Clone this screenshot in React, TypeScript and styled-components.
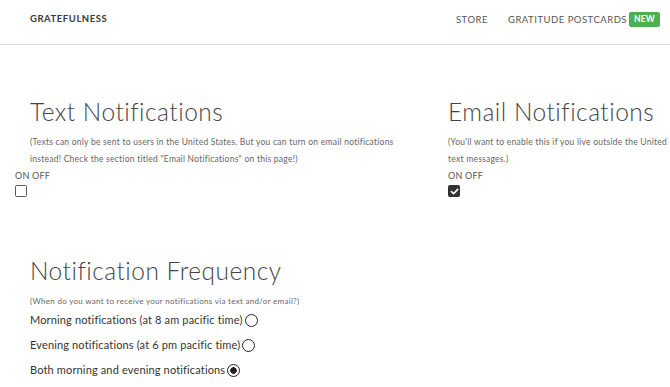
import styled, { createGlobalStyle } from "styled-components";

const GlobalStyle = createGlobalStyle`
    html, body {
        margin: 0;
        padding: 0;
        background: #ffffff;
        overflow: hidden;
    }
    body {
        font-family: Lato, "Open Sans", sans-serif;
        color: #333333;
    }
`;

interface SectionInfo {
    title: string;
    lines: string[];
    checked: boolean;
}

const sections: SectionInfo[] = [
    {
        title: "Text Notifications",
        lines: [
            "(Texts can only be sent to users in the United States. But you can turn on email notifications",
            "instead! Check the section titled \"Email Notifications\" on this page!)",
        ],
        checked: false,
    },
    {
        title: "Email Notifications",
        lines: [
            "(You'll want to enable this if you live outside the United States or if you don't want to receive",
            "text messages.)",
        ],
        checked: true,
    },
];

const frequencies = [
    { label: "Morning notifications (at 8 am pacific time)", selected: false },
    { label: "Evening notifications (at 6 pm pacific time)", selected: false },
    { label: "Both morning and evening notifications", selected: true },
];

export default function App() {
    return (
        <Page>
            <GlobalStyle />
            <NavBar>
                <Brand>GRATEFULNESS</Brand>
                <NavLinks>
                    <NavLink>STORE</NavLink>
                    <NavLink>
                        GRATITUDE POSTCARDS
                        <NewBadge>NEW</NewBadge>
                    </NavLink>
                </NavLinks>
            </NavBar>

            <Columns>
                {sections.map(function (section, i) {
                    const first = i === 0;
                    return (
                        <Column key={section.title} $first={first}>
                            <Heading>{section.title}</Heading>
                            <Description>
                                {section.lines.map(function (line) {
                                    return <span key={line}>{line}<br /></span>;
                                })}
                            </Description>
                            <Toggle $shift={first}>
                                <ToggleLabel>ON OFF</ToggleLabel>
                                <CheckBox $checked={section.checked}>
                                    {section.checked && (
                                        <svg width="9" height="9" viewBox="0 0 10 10">
                                            <path d="M1.6 5.2 L4 7.5 L8.6 2.6" fill="none" stroke="#ffffff" strokeWidth="1.8" strokeLinecap="round" strokeLinejoin="round" />
                                        </svg>
                                    )}
                                </CheckBox>
                            </Toggle>
                        </Column>
                    );
                })}
            </Columns>

            <Frequency>
                <Heading>Notification Frequency</Heading>
                <SmallNote>(When do you want to receive your notifications via text and/or email?)</SmallNote>
                <Options>
                    {frequencies.map(function (f) {
                        return (
                            <Option key={f.label}>
                                {f.label}
                                <Radio $selected={f.selected} />
                            </Option>
                        );
                    })}
                </Options>
            </Frequency>
        </Page>
    );
}

const Page = styled.div`
    width: 670px;
    height: 387px;
    overflow: hidden;
`;

const NavBar = styled.div`
    height: 45px;
    box-sizing: border-box;
    display: flex;
    align-items: flex-start;
    justify-content: space-between;
    padding: 12px 10px 0 30px;
    border-bottom: 1px solid #dcdcdc;
`;

const Brand = styled.div`
    font-size: 9.5px;
    font-weight: 700;
    letter-spacing: 0.55px;
    color: #3a3a3a;
    line-height: 14px;
`;

const NavLinks = styled.div`
    display: flex;
    align-items: center;
    gap: 20px;
`;

const NavLink = styled.div`
    display: flex;
    align-items: center;
    font-size: 9.5px;
    letter-spacing: 0.5px;
    color: #555555;
    line-height: 14px;
`;

const NewBadge = styled.span`
    margin-left: 2px;
    background: #4caf50;
    color: #ffffff;
    font-size: 8.5px;
    font-weight: 700;
    letter-spacing: 0.2px;
    padding: 2px 5px;
    border-radius: 2px;
    line-height: 11px;
`;

const Columns = styled.div`
    display: flex;
    margin-top: 53px;
    width: 900px;
`;

const Column = styled.div<{ $first: boolean }>`
    flex: none;
    width: ${(p) => (p.$first ? "418px" : "450px")};
    padding-left: 30px;
    box-sizing: border-box;
`;

const Heading = styled.h2`
    margin: 0;
    font-size: 24.5px;
    font-weight: 300;
    letter-spacing: 0.5px;
    line-height: 28px;
    color: #444444;
    white-space: nowrap;
`;

const Description = styled.p`
    margin: 8px 0 0;
    font-size: 8.5px;
    letter-spacing: 0.25px;
    line-height: 16.5px;
    color: #666666;
    white-space: nowrap;
`;

const Toggle = styled.div<{ $shift: boolean }>`
    margin-left: ${(p) => (p.$shift ? "-15px" : "0")};
    margin-top: 2px;
    display: flex;
    flex-direction: column;
    align-items: flex-start;
`;

const ToggleLabel = styled.div`
    font-size: 9px;
    letter-spacing: 0.2px;
    color: #555555;
    line-height: 14px;
`;

const CheckBox = styled.div<{ $checked: boolean }>`
    margin-top: 2px;
    width: 12px;
    height: 12px;
    box-sizing: border-box;
    border: 1.5px solid ${(p) => (p.$checked ? "#333333" : "#555555")};
    border-radius: 1.5px;
    background: ${(p) => (p.$checked ? "#333333" : "#ffffff")};
    display: flex;
    align-items: center;
    justify-content: center;
`;

const Frequency = styled.div`
    padding-left: 30px;
    margin-top: 60px;
`;

const SmallNote = styled.div`
    margin-top: 10px;
    font-size: 8px;
    letter-spacing: 0.3px;
    color: #666666;
    line-height: 12px;
`;

const Options = styled.div`
    display: flex;
    flex-direction: column;
    gap: 9px;
    margin-top: 5px;
`;

const Option = styled.div`
    display: flex;
    align-items: center;
    font-size: 11px;
    letter-spacing: 0.15px;
    color: #333333;
    line-height: 16px;
`;

const Radio = styled.span<{ $selected: boolean }>`
    margin-left: 2px;
    width: 13px;
    height: 13px;
    box-sizing: border-box;
    border-radius: 50%;
    border: 1.5px solid #222222;
    background: ${(p) => (p.$selected ? "radial-gradient(circle, #222222 0 3px, #ffffff 3.5px)" : "#ffffff")};
`;
